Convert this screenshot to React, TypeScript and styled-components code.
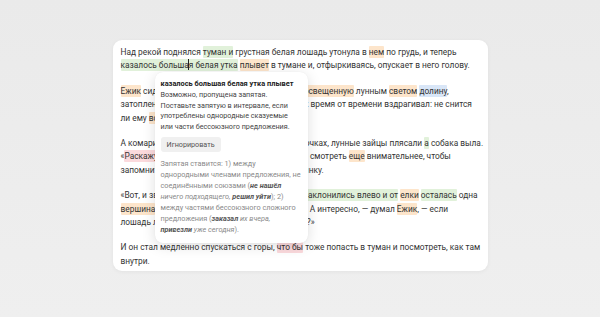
import React from "react";
import styled, { createGlobalStyle } from "styled-components";

const GlobalStyle = createGlobalStyle`
  html, body {
    margin: 0;
    padding: 0;
  }
  body {
    background: #ebebeb;
    font-family: "Roboto", "Liberation Sans", sans-serif;
    -webkit-font-smoothing: antialiased;
  }
`;

const Page = styled.div`
  width: 600px;
  height: 317px;
  box-sizing: border-box;
  padding-top: 40px;
  display: flex;
  justify-content: center;
  align-items: flex-start;
  background: linear-gradient(#eaeaea, #efefef);
`;

const Card = styled.div`
  position: relative;
  width: 375px;
  box-sizing: border-box;
  padding: 6px 8px 3px;
  background: #fff;
  border-radius: 9px;
  box-shadow: 0 1px 4px rgba(0, 0, 0, 0.05);
`;

const Paragraph = styled.p`
  margin: 0 0 12px;
  font-size: 8.35px;
  line-height: 13.4px;
  color: #333;
  white-space: nowrap;
  &:last-of-type {
    margin-bottom: 0;
  }
`;

type Tone = "green" | "peach" | "blue" | "pink";

const toneColors: Record<Tone, string> = {
  green: "#e1f1da",
  peach: "#fde5cb",
  blue: "#d9e6f7",
  pink: "#fbdadd",
};

const Mark = styled.span<{ $tone: Tone }>`
  background: ${(p) => toneColors[p.$tone]};
  padding: 1px 0;
  border-radius: 1px;
`;

const Caret = styled.span`
  display: inline-block;
  width: 1px;
  height: 11px;
  margin: 0 -0.5px;
  vertical-align: -2px;
  background: #222;
`;

const Popup = styled.div`
  position: absolute;
  left: 42px;
  top: 32px;
  width: 153px;
  box-sizing: border-box;
  padding: 7px 7px 8px 6px;
  background: #fff;
  border-radius: 8px;
  box-shadow: 0 3px 14px rgba(0, 0, 0, 0.13), 0 0 1px rgba(0, 0, 0, 0.08);
  white-space: nowrap;
`;

const PopupTitle = styled.div`
  font-size: 7.4px;
  line-height: 10px;
  font-weight: 700;
  color: #222;
  margin-bottom: 1px;
`;

const PopupText = styled.div`
  font-size: 7.2px;
  line-height: 10.6px;
  color: #444;
`;

const IgnoreButton = styled.button`
  display: block;
  margin: 5px 0 6px;
  padding: 0 6px;
  height: 15px;
  border: none;
  border-radius: 3px;
  background: #f0f0f0;
  color: #555;
  font-family: inherit;
  font-size: 7.2px;
  cursor: pointer;
`;

const Explain = styled.div`
  font-size: 7.3px;
  line-height: 11px;
  color: #8a8a8a;
  b {
    font-style: italic;
    font-weight: 700;
    color: #555;
  }
  i {
    font-style: italic;
  }
`;

export default function App() {
  return (
    <>
      <GlobalStyle />
      <Page>
        <Card>
          <Paragraph>
            Над рекой поднялся <Mark $tone="green">туман и</Mark> грустная белая лошадь утонула в{" "}
            <Mark $tone="peach">нем</Mark> по грудь, и теперь
            <br />
            <Mark $tone="green">
              казалось больша
              <Caret />я белая утка
            </Mark>{" "}
            <Mark $tone="peach">плывет</Mark> в тумане и, отфыркиваясь, опускает в него голову.
          </Paragraph>
          <Paragraph>
            <Mark $tone="peach">Ежик</Mark> сидел на горке под сосной и смотрел на{" "}
            <Mark $tone="peach">освещенную</Mark> лунным <Mark $tone="peach">светом</Mark>{" "}
            <Mark $tone="blue">долину</Mark>,
            <br />
            затопленную туманом. Красиво было, что <Mark $tone="peach">Ежик</Mark> время от
            времени вздрагивал: не снится
            <br />
            ли ему <Mark $tone="peach">все</Mark> это?
          </Paragraph>
          <Paragraph>
            А комарики играли на своих крошечных скрипочках, лунные зайцы плясали{" "}
            <Mark $tone="green">а</Mark> собака выла.
            <br />
            «<Mark $tone="pink">Раскажу</Mark> Медвежонку» — подумал Ежик и стал смотреть{" "}
            <Mark $tone="peach">еще</Mark> внимательнее, чтобы
            <br />
            запомнить навсегда каждую звездочку и травинку.
          </Paragraph>
          <Paragraph>
            «Вот, и звезда упала, и сухие травы и{" "}
            <Mark $tone="green">деревья наклонились влево и от</Mark>{" "}
            <Mark $tone="peach">елки</Mark> <Mark $tone="green">осталась</Mark> одна
            <br />
            <Mark $tone="peach">вершина</Mark>, и она теперь плывет рядом с луною... А интересно,
            — думал <Mark $tone="peach">Ежик</Mark>, — если
            <br />
            лошадь ляжет спать, она захлебнется в тумане?»
          </Paragraph>
          <Paragraph>
            И он стал медленно спускаться с горы, <Mark $tone="pink">что бы</Mark> тоже попасть в
            туман и посмотреть, как там
            <br />
            внутри.
          </Paragraph>
          <Popup>
            <PopupTitle>казалось большая белая утка плывет</PopupTitle>
            <PopupText>
              Возможно, пропущена запятая.
              <br />
              Поставьте запятую в интервале, если
              <br />
              употреблены однородные сказуемые
              <br />
              или части бессоюзного предложения.
            </PopupText>
            <IgnoreButton>Игнорировать</IgnoreButton>
            <Explain>
              Запятая ставится: 1) между
              <br />
              однородными членами предложения, не
              <br />
              соединёнными союзами (<b>не нашёл</b>
              <br />
              <i>ничего подходящего,</i> <b>решил уйти</b>); 2)
              <br />
              между частями бессоюзного сложного
              <br />
              предложения (<b>заказал</b> <i>их вчера,</i>
              <br />
              <b>привезли</b> <i>уже сегодня</i>).
            </Explain>
          </Popup>
        </Card>
      </Page>
    </>
  );
}
